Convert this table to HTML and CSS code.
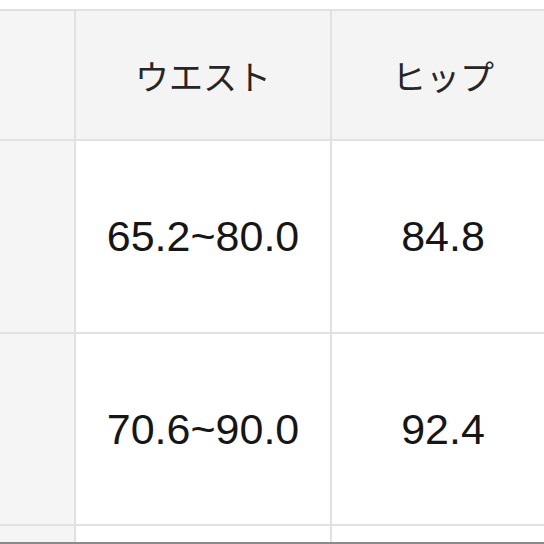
FILE: index.html
```html
<!DOCTYPE html>
<html lang="ja">
<head>
<meta charset="utf-8">
<link rel="stylesheet" href="styles.css">
</head>
<body>
<div class="viewport">
  <div class="table">
    <div class="cell head side"></div>
    <div class="cell head">ウエスト</div>
    <div class="cell head">ヒップ</div>

    <div class="cell side row1"></div>
    <div class="cell num row1">65.2~80.0</div>
    <div class="cell num row1">84.8</div>

    <div class="cell side row2"></div>
    <div class="cell num row2">70.6~90.0</div>
    <div class="cell num row2">92.4</div>

    <div class="cell side row3"></div>
    <div class="cell row3"></div>
    <div class="cell row3"></div>
  </div>
  <div class="edge"></div>
</div>
</body>
</html>
```
FILE: styles.css
```css
html, body {
  margin: 0;
  padding: 0;
  background: #ffffff;
}
.viewport {
  width: 544px;
  height: 544px;
  overflow: hidden;
  padding-top: 9px;
  box-sizing: border-box;
  display: flex;
  flex-direction: column;
}
.table {
  display: grid;
  grid-template-columns: 76px 256px 224px;
  grid-template-rows: 130px 193px 192px 16px;
  border-top: 2px solid #e1e1e1;
  font-family: "Liberation Sans", "Noto Sans CJK JP", sans-serif;
  color: #161616;
}
.cell {
  display: flex;
  align-items: center;
  justify-content: center;
  border-right: 2px solid #e1e1e1;
  border-bottom: 2px solid #e1e1e1;
  background: #ffffff;
}
.head {
  background: #f4f4f4;
  font-family: "Noto Sans CJK JP", sans-serif;
  font-size: 34px;
  font-weight: 400;
  color: #262626;
}
.side {
  background: #f5f5f5;
}
.num {
  font-size: 43px;
}
.row3 {
  border-bottom: none;
}
.edge {
  border-top: 2px solid #8a8a8a;
}
```
